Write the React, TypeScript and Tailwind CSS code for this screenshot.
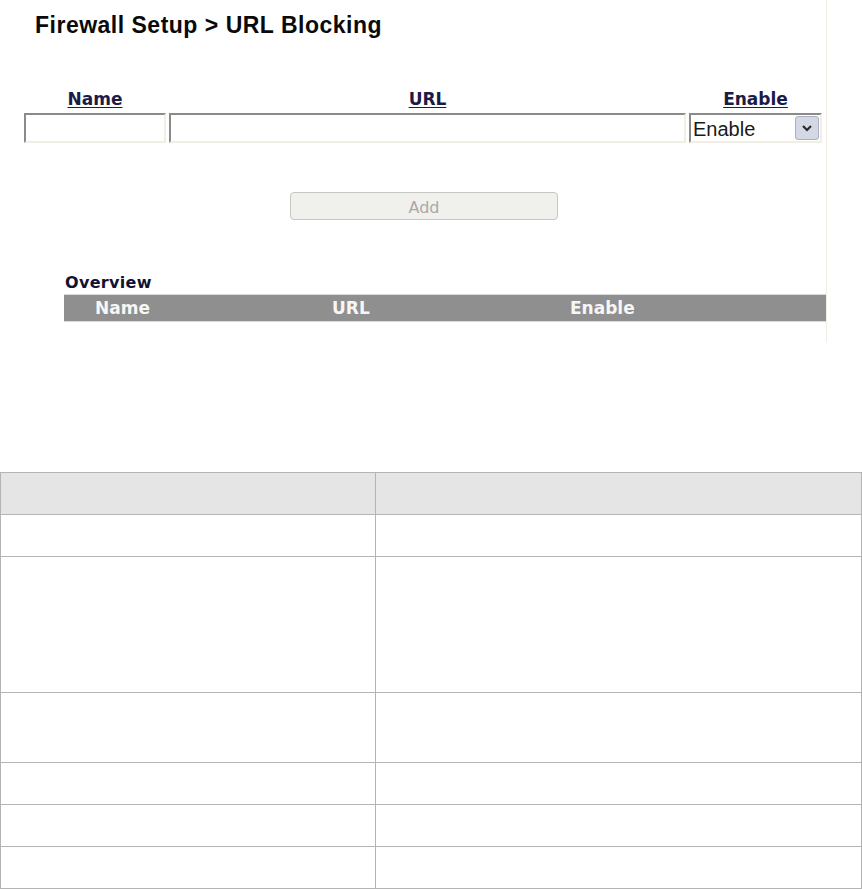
import React from "react";

const rows = [42, 42, 136, 70, 42, 42, 42];

export default function App() {
  return (
    <div className="w-[862px] h-[889px] bg-white relative" style={{ fontFamily: '"Liberation Sans", Arial, sans-serif' }}>
      <div className="w-[827px] h-[342px] border-r border-[#efefe6]">
        <div className="pt-[14px] pl-[35px] text-[23px] leading-[23px] font-bold tracking-[0.5px] text-[#0a0a0a]">
          Firewall Setup &gt; URL Blocking
        </div>
        <div className="mt-[54px] pl-[24px] flex gap-[3px] text-[17px] leading-[17px] font-bold text-[#1b1b48]" style={{ fontFamily: '"DejaVu Sans", Verdana, sans-serif' }}>
          <div className="w-[142px] text-center"><span className="underline underline-offset-[2px]">Name</span></div>
          <div className="w-[517px] text-center"><span className="underline underline-offset-[2px]">URL</span></div>
          <div className="w-[133px] text-center"><span className="underline underline-offset-[2px]">Enable</span></div>
        </div>
        <div className="mt-[5px] pl-[24px] flex gap-[3px]">
          <div className="w-[142px] h-[30px] border-2 border-t-[#8a8a8a] border-l-[#8a8a8a] border-b-[#f1efe4] border-r-[#f1efe4] bg-white" />
          <div className="w-[517px] h-[30px] border-2 border-t-[#8a8a8a] border-l-[#8a8a8a] border-b-[#f1efe4] border-r-[#f1efe4] bg-white" />
          <div className="w-[133px] h-[30px] border-2 border-t-[#8a8a8a] border-l-[#8a8a8a] border-b-[#f1efe4] border-r-[#f1efe4] bg-white flex items-center justify-between pl-[2px] pr-[1px]">
            <span className="text-[20px] leading-[26px] pt-[2px] text-[#1a1a1a]">Enable</span>
            <div className="w-[24px] h-[24px] rounded-[3px] border border-[#aab0c4] bg-[#d4d8e4] flex items-center justify-center">
              <svg width="12" height="10" viewBox="0 0 12 10">
                <path d="M2 3 L6 7 L10 3" fill="none" stroke="#2a2a2a" strokeWidth="2.2" />
              </svg>
            </div>
          </div>
        </div>
        <div className="mt-[49px] pl-[290px]">
          <div className="w-[268px] h-[28px] pt-[3px] rounded-[4px] border border-[#c6c6c2] bg-[#f0f0ec] flex items-center justify-center text-[16px] text-[#a9a9a9]" style={{ fontFamily: '"DejaVu Sans", Tahoma, sans-serif' }}>
            Add
          </div>
        </div>
        <div className="mt-[55px] pl-[65px] text-[16px] leading-[16px] font-bold tracking-[0.3px] text-[#121230]" style={{ fontFamily: '"DejaVu Sans", Verdana, sans-serif' }}>
          Overview
        </div>
        <div className="mt-[3px] ml-[64px] h-[28px] border-t border-b border-[#dadada] bg-[#8f8f8f] flex text-[17px] leading-[27px] font-bold text-[#f6f6f6]" style={{ fontFamily: '"DejaVu Sans", Verdana, sans-serif' }}>
          <div className="w-[268px] pl-[31px]">Name</div>
          <div className="w-[238px]">URL</div>
          <div className="flex-1">Enable</div>
        </div>
      </div>
      <div className="mt-[130px] w-[862px] border-t border-l border-[#b4b4b4]">
        {rows.map((h, i) => (
          <div key={i} className="flex" style={{ height: h }}>
            <div className={`w-[375px] border-r border-b border-[#b4b4b4] ${i === 0 ? "bg-[#e5e5e5]" : "bg-white"}`} />
            <div className={`flex-1 border-r border-b border-[#b4b4b4] ${i === 0 ? "bg-[#e5e5e5]" : "bg-white"}`} />
          </div>
        ))}
      </div>
    </div>
  );
}
